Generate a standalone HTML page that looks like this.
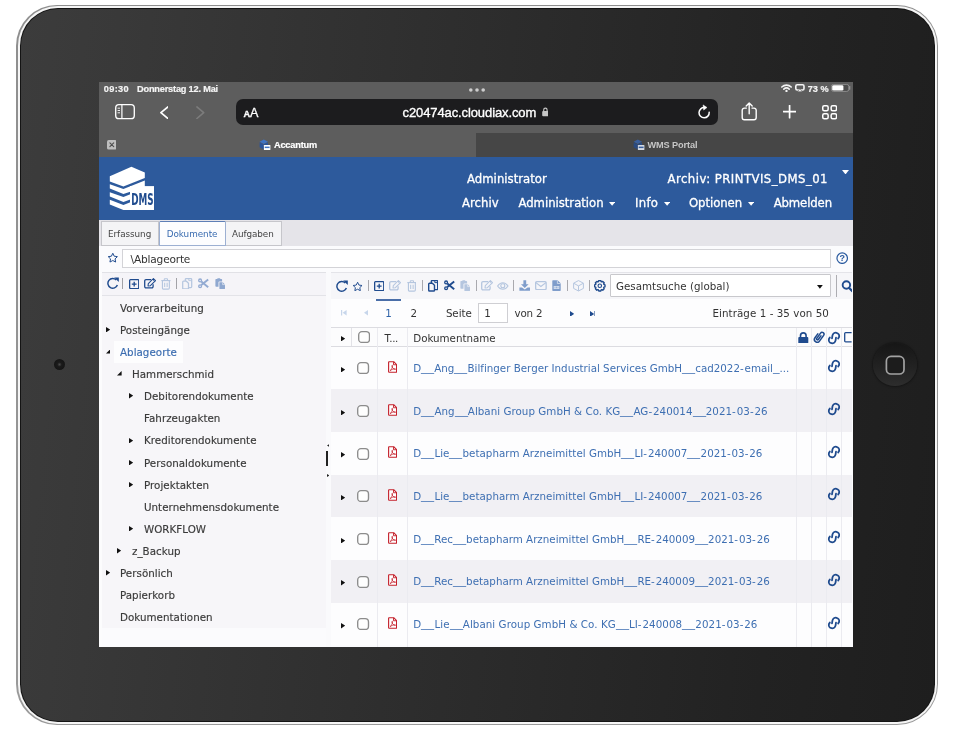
<!DOCTYPE html>
<html lang="de"><head><meta charset="utf-8"><title>Accantum</title>
<style>
html,body{margin:0;padding:0}
body{width:958px;height:731px;position:relative;overflow:hidden;background:#fff}
.a{position:absolute;display:block}
.t{position:absolute;white-space:nowrap;display:block}
.t i{font-style:normal}
.t i.u{display:inline-block;transform:translateY(-0.7px) scaleX(1.272);transform-origin:0 50%}
.t i.u2{margin-right:2.8px}
.t i.u1{margin-right:1.4px}
.t i.h{letter-spacing:0.9px}
#device{left:16.3px;top:5px;width:921.4px;height:720.1px;border-radius:41px;background:linear-gradient(180deg,#8e8e8e,#9a9a9a)}
#rim2{left:17.6px;top:6.2px;width:919px;height:717.8px;border-radius:39.8px;background:#f5f5f5}
#rim3{left:19.7px;top:8.1px;width:915.2px;height:714.2px;border-radius:37.8px;background:#141414}
#bezel{left:20.6px;top:9.1px;width:913.4px;height:712.4px;border-radius:36.9px;
 background:linear-gradient(96deg,#3c3c3c 0%,#393939 10%,#2c2c2c 50%,#222 82%,#1e1e1e 100%)}
#screen{will-change:transform;left:0;top:0;width:958px;height:731px;clip-path:inset(82px 105px 84px 99px);background:#fbfbfd}
</style></head>
<body>
<div id="device" class="a"></div><div id="rim2" class="a"></div><div id="rim3" class="a"></div><div id="bezel" class="a"></div>
<div class="a" style="left:53.60px;top:358.60px;width:11.40px;height:11.40px;border-radius:50%;background:radial-gradient(circle at 50% 50%,#4a4a4a 0,#1b1b1b 28%,#151515 70%,#262626 100%)"></div>
<div class="a" style="left:873.00px;top:342.60px;width:43.60px;height:43.60px;border-radius:50%;background:linear-gradient(180deg,#161616 0%,#222 55%,#2d2d2d 100%);box-shadow:0 0 2px 1px rgba(0,0,0,.35)"></div>
<svg class="a" style="left:884.60px;top:354.60px;width:20.40px;height:20.40px" viewBox="0 0 20.4 20.4" ><rect x="1.4" y="1.4" width="17.6" height="17.6" rx="4.6" fill="#1c1c1c" stroke="#a3a3a3" stroke-width="1.7"/></svg>
<div id="screen" class="a">
<div class="a" style="left:99.00px;top:81.00px;width:755.00px;height:76.20px;background:#5d5d5d"></div>
<div class="a" style="left:476.00px;top:132.60px;width:378.00px;height:24.60px;background:#464646"></div>
<div class="a" style="left:235.60px;top:99.00px;width:482.00px;height:25.60px;background:#1c1c1e;border-radius:7px"></div>
<svg class="a" style="left:468.60px;top:88.00px;width:16.00px;height:4.00px" viewBox="0 0 16 4" ><circle cx="1.8" cy="2" r="1.8" fill="#cdcdcd"/><circle cx="8" cy="2" r="1.8" fill="#cdcdcd"/><circle cx="14.2" cy="2" r="1.8" fill="#cdcdcd"/></svg>
<svg class="a" style="left:114.60px;top:104.40px;width:20.00px;height:15.40px" viewBox="0 0 20 15.4" ><rect x="0.7" y="0.7" width="18.6" height="14" rx="3.2" fill="none" stroke="#fff" stroke-width="1.35"/><path d="M6.9 0.7V14.7" stroke="#fff" stroke-width="1.2"/><path d="M2.6 4.2H5M2.6 6.5H5M2.6 8.8H5" stroke="#fff" stroke-width="0.9"/></svg>
<svg class="a" style="left:159.60px;top:105.60px;width:8.80px;height:13.40px" viewBox="0 0 8.8 13.4" ><path d="M7.9 0.9L0.9 6.7L7.9 12.5" fill="none" stroke="#fff" stroke-width="1.7" stroke-linecap="round" stroke-linejoin="round"/></svg>
<svg class="a" style="left:196.20px;top:105.60px;width:8.60px;height:13.40px" viewBox="0 0 8.6 13.4" ><path d="M0.9 0.9L7.7 6.7L0.9 12.5" fill="none" stroke="#7c7c7c" stroke-width="1.6" stroke-linecap="round" stroke-linejoin="round"/></svg>
<svg class="a" style="left:541.70px;top:107.40px;width:6.80px;height:9.40px" viewBox="0 0 6.8 9.4" ><rect x="0.2" y="3.9" width="6.4" height="5.3" rx="1" fill="#c6c6c6"/><path d="M1.7 4.3V2.9a1.7 1.7 0 0 1 3.4 0V4.3" fill="none" stroke="#c6c6c6" stroke-width="1.15"/></svg>
<svg class="a" style="left:696.20px;top:104.40px;width:16.00px;height:16.00px" viewBox="0 0 16 16" ><path d="M13.2 8.3A5.1 5.1 0 1 1 8.6 3.62" fill="none" stroke="#fff" stroke-width="1.5" stroke-linecap="round"/><path d="M7.1 0.9L11 3.5L7.7 6.1Z" fill="#fff" stroke="#fff" stroke-width="0.5" stroke-linejoin="round"/></svg>
<svg class="a" style="left:741.30px;top:102.20px;width:16.40px;height:19.00px" viewBox="0 0 16.4 19" ><path d="M5.4 6.1H3.4A2.2 2.2 0 0 0 1.2 8.3V15.6A2.2 2.2 0 0 0 3.4 17.8H13A2.2 2.2 0 0 0 15.2 15.6V8.3A2.2 2.2 0 0 0 13 6.1H11" fill="none" stroke="#fff" stroke-width="1.4" stroke-linecap="round"/><path d="M8.2 11.8V1.2M5.2 3.9L8.2 0.9L11.2 3.9" fill="none" stroke="#fff" stroke-width="1.4" stroke-linecap="round" stroke-linejoin="round"/></svg>
<svg class="a" style="left:783.10px;top:105.40px;width:13.20px;height:13.20px" viewBox="0 0 13.2 13.2" ><path d="M6.6 0.5V12.7M0.5 6.6H12.7" stroke="#fff" stroke-width="1.7" stroke-linecap="round"/></svg>
<svg class="a" style="left:822.20px;top:105.00px;width:15.30px;height:14.50px" viewBox="0 0 15.3 14.5" ><rect x="0.75" y="0.75" width="5.4" height="5.0" rx="1.5" fill="none" stroke="#fff" stroke-width="1.5"/><rect x="9.15" y="0.75" width="5.4" height="5.0" rx="1.5" fill="none" stroke="#fff" stroke-width="1.5"/><rect x="0.75" y="8.75" width="5.4" height="5.0" rx="1.5" fill="none" stroke="#fff" stroke-width="1.5"/><rect x="9.15" y="8.75" width="5.4" height="5.0" rx="1.5" fill="none" stroke="#fff" stroke-width="1.5"/></svg>
<svg class="a" style="left:781.00px;top:84.00px;width:11.00px;height:8.20px" viewBox="0 0 11 8.2" ><path d="M0.8 3A6.9 6.9 0 0 1 10.2 3" fill="none" stroke="#f4f4f4" stroke-width="1.6" stroke-linecap="round"/><path d="M2.8 5.1A4 4 0 0 1 8.2 5.1" fill="none" stroke="#f4f4f4" stroke-width="1.6" stroke-linecap="round"/><circle cx="5.5" cy="7" r="1.15" fill="#f4f4f4"/></svg>
<svg class="a" style="left:794.80px;top:84.30px;width:9.80px;height:8.00px" viewBox="0 0 9.8 8" ><rect x="0.8" y="0.8" width="8.2" height="5.2" rx="1.4" fill="none" stroke="#f4f4f4" stroke-width="1.6"/><path d="M2.5 7.7L4.9 4.7L7.3 7.7Z" fill="#f4f4f4" stroke="#5d5d5d" stroke-width="0.6"/></svg>
<svg class="a" style="left:830.80px;top:84.30px;width:20.00px;height:7.80px" viewBox="0 0 20 7.8" ><rect x="0.4" y="0.4" width="17.4" height="7" rx="2.1" fill="#4c4c4c" stroke="#9c9c9c" stroke-width="0.8"/><rect x="1.2" y="1.2" width="11.2" height="5.4" rx="1.4" fill="#fff"/><path d="M18.7 2.6V5.2" stroke="#9c9c9c" stroke-width="1.1" stroke-linecap="round"/></svg>
<svg class="a" style="left:106.50px;top:140.40px;width:9.60px;height:9.60px" viewBox="0 0 9.6 9.6" ><rect width="9.6" height="9.6" rx="1.7" fill="#bfbfbf"/><path d="M2.9 2.9L6.7 6.7M6.7 2.9L2.9 6.7" stroke="#505050" stroke-width="1.15" stroke-linecap="round"/></svg>
<svg class="a" style="left:259.00px;top:139.00px;width:11.60px;height:11.60px" viewBox="0 0 11.6 11.6" ><path d="M0.6 2.8L4.8 0.6L9 2.8L4.8 5Z" fill="#3f73c4"/><path d="M0.6 3.3L4.8 5.5V10.4L0.6 8.2Z" fill="#2b549b"/><path d="M5 5.5L9 3.3V6H5Z" fill="#2b549b"/><rect x="4.9" y="6.1" width="6.5" height="4.9" rx="0.5" fill="#fff"/><rect x="5.7" y="7.6" width="4.9" height="1.5" fill="#3f73c4"/></svg>
<svg class="a" style="left:633.00px;top:139.00px;width:11.60px;height:11.60px" viewBox="0 0 11.6 11.6" ><path d="M0.6 2.8L4.8 0.6L9 2.8L4.8 5Z" fill="#3a5f9c"/><path d="M0.6 3.3L4.8 5.5V10.4L0.6 8.2Z" fill="#2a4a80"/><path d="M5 5.5L9 3.3V6H5Z" fill="#2a4a80"/><rect x="4.9" y="6.1" width="6.5" height="4.9" rx="0.5" fill="#d4dae4"/><rect x="5.7" y="7.6" width="4.9" height="1.5" fill="#3a5f9c"/></svg>
<div class="a" style="left:99.00px;top:157.00px;width:755.00px;height:62.60px;background:#2d5a9c"></div>
<svg class="a" style="left:109.00px;top:166.00px;width:46.00px;height:45.40px" viewBox="0 0 46 45.4" ><path d="M0.8 10.2L22.4 0.8L35.8 6.4V12.1L14.4 20.5L0.8 15.4Z" fill="#fff"/><path d="M0.8 18.2L14.4 22.9L35.8 14.6V21H22V25.4L14.4 28.1L0.8 22.4Z" fill="#fff"/><path d="M0.8 26.2L14.4 30.9L22 28V33.2L14.4 36.1L0.8 30.4Z" fill="#fff"/><path d="M0.8 33.7L14.4 38.9L22 36V44H14.4L0.8 38.4Z" fill="#fff"/><rect x="21" y="20.1" width="24" height="23.9" fill="#fff"/><text x="22.2" y="39.2" font-family="DejaVu Sans, Verdana, sans-serif" font-weight="bold" font-size="15.5" fill="#1f4b8e" textLength="22.4" lengthAdjust="spacingAndGlyphs">DMS</text></svg>
<svg class="a" style="left:609.30px;top:201.90px;width:6.20px;height:3.80px" viewBox="0 0 6.2 3.8" ><path d="M0 0H6.2L3.1 3.8Z" fill="#fff"/></svg>
<svg class="a" style="left:663.90px;top:201.90px;width:6.20px;height:3.80px" viewBox="0 0 6.2 3.8" ><path d="M0 0H6.2L3.1 3.8Z" fill="#fff"/></svg>
<svg class="a" style="left:747.90px;top:201.90px;width:6.20px;height:3.80px" viewBox="0 0 6.2 3.8" ><path d="M0 0H6.2L3.1 3.8Z" fill="#fff"/></svg>
<svg class="a" style="left:841.50px;top:169.50px;width:7.00px;height:4.40px" viewBox="0 0 7 4.4" ><path d="M0 0H7L3.5 4.4Z" fill="#fff"/></svg>
<div class="a" style="left:99.00px;top:219.60px;width:755.00px;height:26.40px;background:#e5e4e9"></div>
<div class="a" style="left:99.00px;top:245.50px;width:755.00px;height:1.00px;background:#c2c2c6"></div>
<div class="a" style="left:101.40px;top:221.00px;width:58.00px;height:24.90px;background:#f4f4f6;border:1px solid #c6c6cb;box-sizing:border-box"></div>
<div class="a" style="left:225.00px;top:221.00px;width:56.80px;height:24.90px;background:#f4f4f6;border:1px solid #c6c6cb;box-sizing:border-box"></div>
<div class="a" style="left:159.00px;top:220.80px;width:66.60px;height:25.40px;background:#fdfdfe;border:1px solid #9db0d2;border-top:1.4px solid #5f7fb6;box-sizing:border-box;border-radius:1.5px 1.5px 0 0"></div>
<div class="a" style="left:99.00px;top:246.20px;width:755.00px;height:25.80px;background:#fbfbfd"></div>
<svg class="a" style="left:106.80px;top:252.40px;width:11.60px;height:11.14px" viewBox="0 0 24 23" ><path d="M12 2.6L14.9 8.7L21.5 9.6L16.7 14.2L17.9 20.8L12 17.6L6.1 20.8L7.3 14.2L2.5 9.6L9.1 8.7Z" fill="none" stroke="#1f4b8e" stroke-width="2.05" stroke-linejoin="round"/></svg>
<div class="a" style="left:122.40px;top:249.40px;width:708.40px;height:19.00px;background:#fff;border:1px solid #d3d3d7;box-sizing:border-box"></div>
<svg class="a" style="left:835.80px;top:251.80px;width:12.40px;height:12.40px" viewBox="0 0 12.4 12.4" ><circle cx="6.2" cy="6.2" r="5.25" fill="none" stroke="#2a5a9f" stroke-width="1.2"/><text x="6.2" y="9.4" text-anchor="middle" font-family="Liberation Sans, Arial, sans-serif" font-weight="bold" font-size="9" fill="#2a5a9f">?</text></svg>
<div class="a" style="left:99.00px;top:272.00px;width:3.40px;height:375.00px;background:#fcfcfd"></div>
<div class="a" style="left:102.40px;top:272.40px;width:223.20px;height:355.20px;background:#f5f4f8"></div>
<div class="a" style="left:102.40px;top:271.90px;width:223.20px;height:1.00px;background:#e1e1e6"></div>
<div class="a" style="left:102.40px;top:294.70px;width:223.20px;height:1.00px;background:#e3e3e8"></div>
<div class="a" style="left:102.40px;top:295.60px;width:223.20px;height:332.00px;background:#f7f6f9"></div>
<svg class="a" style="left:106.50px;top:277.30px;width:12.00px;height:12.00px" viewBox="0 0 12 12" ><path d="M9.3 3.0A4.85 4.85 0 1 0 10.35 7.9" fill="none" stroke="#1f4b8e" stroke-width="1.45"/><path d="M7.2 0.4H11.8V5Z" fill="#1f4b8e"/></svg>
<div class="a" style="left:122.40px;top:278.00px;width:1.00px;height:11.20px;background:#a2a2a7"></div>
<svg class="a" style="left:128.60px;top:278.60px;width:10.40px;height:10.20px" viewBox="0 0 10.4 10.2" ><rect x="0.65" y="0.65" width="9.1" height="8.9" rx="0.8" fill="none" stroke="#1f4b8e" stroke-width="1.3"/><path d="M5.2 2.7V7.5M2.8 5.1H7.6" stroke="#1f4b8e" stroke-width="1.3"/></svg>
<svg class="a" style="left:144.00px;top:278.20px;width:12.00px;height:10.60px" viewBox="0 0 12 10.6" ><path d="M7.2 1.7H2A1.3 1.3 0 0 0 0.7 3V8.6A1.3 1.3 0 0 0 2 9.9H7.8A1.3 1.3 0 0 0 9.1 8.6V6.3" fill="none" stroke="#1f4b8e" stroke-width="1.3"/><path d="M4.3 5.6L9.4 0.5L11.5 2.6L6.4 7.7L4 8Z" fill="none" stroke="#1f4b8e" stroke-width="1.05" stroke-linejoin="round"/><path d="M8.6 1.3L10.7 3.4" stroke="#1f4b8e" stroke-width="0.9"/></svg>
<svg class="a" style="left:161.30px;top:277.70px;width:9.80px;height:11.90px" viewBox="0 0 9.6 11.4" ><path d="M0.3 2.4H9.3" stroke="#b5c6df" stroke-width="1.1"/><path d="M3.2 2.2V1.2A0.6 0.6 0 0 1 3.8 0.6H5.8A0.6 0.6 0 0 1 6.4 1.2V2.2" fill="none" stroke="#b5c6df" stroke-width="1"/><path d="M1.4 2.6V9.6A1.2 1.2 0 0 0 2.6 10.8H7A1.2 1.2 0 0 0 8.2 9.6V2.6" fill="none" stroke="#b5c6df" stroke-width="1.1"/><path d="M3.6 4.6V8.8M6 4.6V8.8" stroke="#b5c6df" stroke-width="1"/></svg>
<div class="a" style="left:176.40px;top:278.00px;width:1.00px;height:11.20px;background:#a2a2a7"></div>
<svg class="a" style="left:182.20px;top:277.80px;width:10.40px;height:11.60px" viewBox="0 0 10.4 11.6" ><path d="M3.3 3.1V1.4A0.8 0.8 0 0 1 4.1 0.6H8.9A0.8 0.8 0 0 1 9.7 1.4V8.8A0.8 0.8 0 0 1 8.9 9.6H6.6" fill="none" stroke="#b5c6df" stroke-width="1.25"/><path d="M0.7 4A0.8 0.8 0 0 1 1.5 3.2H4.4L6.5 5.2V10.2A0.8 0.8 0 0 1 5.7 11H1.5A0.8 0.8 0 0 1 0.7 10.2Z" fill="none" stroke="#b5c6df" stroke-width="1.25" stroke-linejoin="round"/><path d="M6.8 0.8V2.6H9.5" fill="none" stroke="#b5c6df" stroke-width="0.88"/></svg>
<svg class="a" style="left:198.20px;top:278.20px;width:10.60px;height:10.60px" viewBox="0 0 10.6 10.6" ><circle cx="2.1" cy="2.4" r="1.4" fill="none" stroke="#93abd2" stroke-width="1.3"/><circle cx="2.1" cy="8.2" r="1.4" fill="none" stroke="#93abd2" stroke-width="1.3"/><path d="M3.3 3.5L10.2 9.2M3.3 7.1L10.2 1.4" stroke="#93abd2" stroke-width="1.9"/></svg>
<svg class="a" style="left:214.80px;top:277.80px;width:10.40px;height:11.40px" viewBox="0 0 10.4 11.4" ><path d="M0.4 1.6A0.7 0.7 0 0 1 1.1 0.9H2.4V0.3H5.2V0.9H6.4A0.7 0.7 0 0 1 7.1 1.6V3.4H4.4A0.9 0.9 0 0 0 3.5 4.3V8.8H1.1A0.7 0.7 0 0 1 0.4 8.1Z" fill="#8fa8d0"/><path d="M4.4 4.3H7.8L10 6.4V10.4A0.6 0.6 0 0 1 9.4 11H5A0.6 0.6 0 0 1 4.4 10.4Z" fill="#8fa8d0"/><path d="M7.6 4.4V6.6H9.9" fill="none" stroke="#f6f6f9" stroke-width="0.6"/></svg>
<svg class="a" style="left:105.90px;top:326.84px;width:4.20px;height:5.40px" viewBox="0 0 4.2 5.4" ><path d="M0 0L4.2 2.7L0 5.4Z" fill="#111"/></svg>
<div class="a" style="left:113.80px;top:341.20px;width:68.80px;height:21.40px;background:#fdfdfe"></div>
<svg class="a" style="left:105.70px;top:349.18px;width:4.60px;height:4.60px" viewBox="0 0 4.6 4.6" ><path d="M4.6 0V4.6H0Z" fill="#111"/></svg>
<svg class="a" style="left:117.10px;top:371.32px;width:4.60px;height:4.60px" viewBox="0 0 4.6 4.6" ><path d="M4.6 0V4.6H0Z" fill="#111"/></svg>
<svg class="a" style="left:129.30px;top:393.26px;width:4.20px;height:5.40px" viewBox="0 0 4.2 5.4" ><path d="M0 0L4.2 2.7L0 5.4Z" fill="#111"/></svg>
<svg class="a" style="left:129.30px;top:437.54px;width:4.20px;height:5.40px" viewBox="0 0 4.2 5.4" ><path d="M0 0L4.2 2.7L0 5.4Z" fill="#111"/></svg>
<svg class="a" style="left:129.30px;top:459.68px;width:4.20px;height:5.40px" viewBox="0 0 4.2 5.4" ><path d="M0 0L4.2 2.7L0 5.4Z" fill="#111"/></svg>
<svg class="a" style="left:129.30px;top:481.82px;width:4.20px;height:5.40px" viewBox="0 0 4.2 5.4" ><path d="M0 0L4.2 2.7L0 5.4Z" fill="#111"/></svg>
<svg class="a" style="left:129.30px;top:526.10px;width:4.20px;height:5.40px" viewBox="0 0 4.2 5.4" ><path d="M0 0L4.2 2.7L0 5.4Z" fill="#111"/></svg>
<svg class="a" style="left:117.30px;top:548.24px;width:4.20px;height:5.40px" viewBox="0 0 4.2 5.4" ><path d="M0 0L4.2 2.7L0 5.4Z" fill="#111"/></svg>
<svg class="a" style="left:105.90px;top:570.38px;width:4.20px;height:5.40px" viewBox="0 0 4.2 5.4" ><path d="M0 0L4.2 2.7L0 5.4Z" fill="#111"/></svg>
<div class="a" style="left:325.60px;top:272.00px;width:5.40px;height:375.00px;background:#fafafc"></div>
<div class="a" style="left:326.45px;top:451.20px;width:1.70px;height:14.40px;background:#222"></div>
<svg class="a" style="left:326.80px;top:443.80px;width:2.60px;height:3.00px" viewBox="0 0 2.6 3" ><path d="M2.6 0V3L0 1.5Z" fill="#222"/></svg>
<svg class="a" style="left:326.90px;top:474.00px;width:2.60px;height:3.00px" viewBox="0 0 2.6 3" ><path d="M0 0V3L2.6 1.5Z" fill="#222"/></svg>
<div class="a" style="left:331.20px;top:272.00px;width:522.80px;height:27.00px;background:#f6f6f9"></div>
<div class="a" style="left:331.20px;top:271.50px;width:522.80px;height:1.00px;background:#e4e4e9"></div>
<div class="a" style="left:331.20px;top:299.00px;width:520.40px;height:28.40px;background:#fdfdfe"></div>
<div class="a" style="left:851.60px;top:272.40px;width:2.40px;height:374.60px;background:#fbfbfd"></div>
<svg class="a" style="left:335.80px;top:279.80px;width:12.00px;height:12.00px" viewBox="0 0 12 12" ><path d="M9.3 3.0A4.85 4.85 0 1 0 10.35 7.9" fill="none" stroke="#1f4b8e" stroke-width="1.45"/><path d="M7.2 0.4H11.8V5Z" fill="#1f4b8e"/></svg>
<svg class="a" style="left:352.40px;top:280.60px;width:11.20px;height:10.75px" viewBox="0 0 24 23" ><path d="M12 2.6L14.9 8.7L21.5 9.6L16.7 14.2L17.9 20.8L12 17.6L6.1 20.8L7.3 14.2L2.5 9.6L9.1 8.7Z" fill="none" stroke="#1f4b8e" stroke-width="2.05" stroke-linejoin="round"/></svg>
<div class="a" style="left:367.90px;top:279.80px;width:1.00px;height:11.20px;background:#a9a9ae"></div>
<svg class="a" style="left:373.90px;top:280.80px;width:10.40px;height:10.20px" viewBox="0 0 10.4 10.2" ><rect x="0.65" y="0.65" width="9.1" height="8.9" rx="0.8" fill="none" stroke="#1f4b8e" stroke-width="1.3"/><path d="M5.2 2.7V7.5M2.8 5.1H7.6" stroke="#1f4b8e" stroke-width="1.3"/></svg>
<svg class="a" style="left:389.40px;top:280.40px;width:12.00px;height:10.60px" viewBox="0 0 12 10.6" ><path d="M7.2 1.7H2A1.3 1.3 0 0 0 0.7 3V8.6A1.3 1.3 0 0 0 2 9.9H7.8A1.3 1.3 0 0 0 9.1 8.6V6.3" fill="none" stroke="#b5c6df" stroke-width="1.3"/><path d="M4.3 5.6L9.4 0.5L11.5 2.6L6.4 7.7L4 8Z" fill="none" stroke="#b5c6df" stroke-width="1.05" stroke-linejoin="round"/><path d="M8.6 1.3L10.7 3.4" stroke="#b5c6df" stroke-width="0.9"/></svg>
<svg class="a" style="left:406.60px;top:280.00px;width:9.80px;height:11.90px" viewBox="0 0 9.6 11.4" ><path d="M0.3 2.4H9.3" stroke="#b5c6df" stroke-width="1.1"/><path d="M3.2 2.2V1.2A0.6 0.6 0 0 1 3.8 0.6H5.8A0.6 0.6 0 0 1 6.4 1.2V2.2" fill="none" stroke="#b5c6df" stroke-width="1"/><path d="M1.4 2.6V9.6A1.2 1.2 0 0 0 2.6 10.8H7A1.2 1.2 0 0 0 8.2 9.6V2.6" fill="none" stroke="#b5c6df" stroke-width="1.1"/><path d="M3.6 4.6V8.8M6 4.6V8.8" stroke="#b5c6df" stroke-width="1"/></svg>
<div class="a" style="left:421.90px;top:279.80px;width:1.00px;height:11.20px;background:#a9a9ae"></div>
<svg class="a" style="left:427.80px;top:280.20px;width:10.40px;height:11.60px" viewBox="0 0 10.4 11.6" ><path d="M3.3 3.1V1.4A0.8 0.8 0 0 1 4.1 0.6H8.9A0.8 0.8 0 0 1 9.7 1.4V8.8A0.8 0.8 0 0 1 8.9 9.6H6.6" fill="none" stroke="#1f4b8e" stroke-width="1.4"/><path d="M0.7 4A0.8 0.8 0 0 1 1.5 3.2H4.4L6.5 5.2V10.2A0.8 0.8 0 0 1 5.7 11H1.5A0.8 0.8 0 0 1 0.7 10.2Z" fill="none" stroke="#1f4b8e" stroke-width="1.4" stroke-linejoin="round"/><path d="M6.8 0.8V2.6H9.5" fill="none" stroke="#1f4b8e" stroke-width="0.98"/></svg>
<svg class="a" style="left:444.00px;top:280.40px;width:10.60px;height:10.60px" viewBox="0 0 10.6 10.6" ><circle cx="2.1" cy="2.4" r="1.4" fill="none" stroke="#1f4b8e" stroke-width="1.3"/><circle cx="2.1" cy="8.2" r="1.4" fill="none" stroke="#1f4b8e" stroke-width="1.3"/><path d="M3.3 3.5L10.2 9.2M3.3 7.1L10.2 1.4" stroke="#1f4b8e" stroke-width="1.9"/></svg>
<svg class="a" style="left:460.30px;top:280.00px;width:10.40px;height:11.40px" viewBox="0 0 10.4 11.4" ><path d="M0.4 1.6A0.7 0.7 0 0 1 1.1 0.9H2.4V0.3H5.2V0.9H6.4A0.7 0.7 0 0 1 7.1 1.6V3.4H4.4A0.9 0.9 0 0 0 3.5 4.3V8.8H1.1A0.7 0.7 0 0 1 0.4 8.1Z" fill="#b5c6df"/><path d="M4.4 4.3H7.8L10 6.4V10.4A0.6 0.6 0 0 1 9.4 11H5A0.6 0.6 0 0 1 4.4 10.4Z" fill="#b5c6df"/><path d="M7.6 4.4V6.6H9.9" fill="none" stroke="#f6f6f9" stroke-width="0.6"/></svg>
<div class="a" style="left:475.90px;top:279.80px;width:1.00px;height:11.20px;background:#a9a9ae"></div>
<svg class="a" style="left:480.60px;top:280.40px;width:12.00px;height:10.60px" viewBox="0 0 12 10.6" ><path d="M7.2 1.7H2A1.3 1.3 0 0 0 0.7 3V8.6A1.3 1.3 0 0 0 2 9.9H7.8A1.3 1.3 0 0 0 9.1 8.6V6.3" fill="none" stroke="#b5c6df" stroke-width="1.3"/><path d="M4.3 5.6L9.4 0.5L11.5 2.6L6.4 7.7L4 8Z" fill="none" stroke="#b5c6df" stroke-width="1.05" stroke-linejoin="round"/><path d="M8.6 1.3L10.7 3.4" stroke="#b5c6df" stroke-width="0.9"/></svg>
<svg class="a" style="left:497.40px;top:282.00px;width:11.60px;height:8.00px" viewBox="0 0 11.6 8" ><path d="M0.6 4C2.2 1.5 4 0.7 5.8 0.7S9.4 1.5 11 4C9.4 6.5 7.6 7.3 5.8 7.3S2.2 6.5 0.6 4Z" fill="none" stroke="#b5c6df" stroke-width="1.1"/><circle cx="5.8" cy="3.8" r="2" fill="none" stroke="#b5c6df" stroke-width="1.1"/></svg>
<div class="a" style="left:513.00px;top:279.80px;width:1.00px;height:11.20px;background:#a9a9ae"></div>
<svg class="a" style="left:518.80px;top:280.00px;width:11.60px;height:11.00px" viewBox="0 0 11.6 11" ><path d="M4.4 0.3H7.2V4.2H9.6L5.8 8L2 4.2H4.4Z" fill="#7f9dcb"/><path d="M0.4 7.6H3L5.8 9.6L8.6 7.6H11.2V10.7H0.4Z" fill="#7f9dcb"/></svg>
<svg class="a" style="left:535.00px;top:281.20px;width:11.80px;height:9.20px" viewBox="0 0 11.8 9.2" ><rect x="0.65" y="0.65" width="10.5" height="7.9" rx="1.1" fill="none" stroke="#b5c6df" stroke-width="1.3"/><path d="M0.9 1.6L5.9 5.6L10.9 1.6" fill="none" stroke="#b5c6df" stroke-width="1.2"/></svg>
<svg class="a" style="left:552.40px;top:280.00px;width:9.00px;height:11.20px" viewBox="0 0 9 11.2" ><path d="M0.3 0.9A0.6 0.6 0 0 1 0.9 0.3H5.6L8.7 3.3V10.3A0.6 0.6 0 0 1 8.1 10.9H0.9A0.6 0.6 0 0 1 0.3 10.3Z" fill="#7f9dcb"/><path d="M5.4 0.5V3.5H8.5" fill="none" stroke="#f6f6f9" stroke-width="0.6"/><rect x="1.7" y="6" width="5.6" height="3" fill="#dfe7f3"/><path d="M3 6.6V8.4M4.5 6.6V8.4M6 6.6V8.4" stroke="#7f9dcb" stroke-width="0.7"/></svg>
<div class="a" style="left:566.90px;top:279.80px;width:1.00px;height:11.20px;background:#a9a9ae"></div>
<svg class="a" style="left:572.50px;top:280.00px;width:11.00px;height:11.60px" viewBox="0 0 11 11.6" ><path d="M5.5 0.6L10.4 3.2V8.4L5.5 11L0.6 8.4V3.2Z" fill="none" stroke="#b5c6df" stroke-width="1" stroke-linejoin="round"/><path d="M0.8 3.3L5.5 5.9L10.2 3.3M5.5 5.9V10.8" fill="none" stroke="#b5c6df" stroke-width="1"/></svg>
<div class="a" style="left:588.50px;top:279.80px;width:1.00px;height:11.20px;background:#a9a9ae"></div>
<svg class="a" style="left:594.00px;top:280.20px;width:11.60px;height:11.60px" viewBox="0 0 11.6 11.6" ><path d="M4.80 0.60L6.80 0.60L7.17 1.67L7.75 1.91L8.77 1.41L10.19 2.83L9.69 3.85L9.93 4.43L11.00 4.80L11.00 6.80L9.93 7.17L9.69 7.75L10.19 8.77L8.77 10.19L7.75 9.69L7.17 9.93L6.80 11.00L4.80 11.00L4.43 9.93L3.85 9.69L2.83 10.19L1.41 8.77L1.91 7.75L1.67 7.17L0.60 6.80L0.60 4.80L1.67 4.43L1.91 3.85L1.41 2.83L2.83 1.41L3.85 1.91L4.43 1.67Z" fill="none" stroke="#1f4b8e" stroke-width="1.4" stroke-linejoin="round"/><circle cx="5.8" cy="5.8" r="1.75" fill="none" stroke="#1f4b8e" stroke-width="1.1"/></svg>
<div class="a" style="left:610.00px;top:274.40px;width:220.80px;height:22.50px;background:#fff;border:1px solid #c8c8cc;box-sizing:border-box;border-radius:1px"></div>
<svg class="a" style="left:817.20px;top:285.20px;width:5.80px;height:3.80px" viewBox="0 0 5.8 3.8" ><path d="M0 0H5.8L2.9 3.8Z" fill="#111"/></svg>
<div class="a" style="left:835.70px;top:275.00px;width:1.00px;height:21.60px;background:#adadb2"></div>
<svg class="a" overflow="hidden" style="left:841.00px;top:279.60px;width:10.60px;height:13.00px" viewBox="0 0 10.6 13" ><circle cx="5.4" cy="5" r="3.75" fill="none" stroke="#1f4b8e" stroke-width="1.9"/><path d="M8.2 7.9L11.6 11.4" stroke="#1f4b8e" stroke-width="2.2" stroke-linecap="round"/></svg>
<div class="a" style="left:375.70px;top:298.95px;width:25.50px;height:1.70px;background:#4a6ea8"></div>
<svg class="a" style="left:341.20px;top:310.40px;width:5.60px;height:5.60px" viewBox="0 0 5.6 5.6" ><path d="M0.6 0V5.6" stroke="#c7d6eb" stroke-width="1.2"/><path d="M5.6 0L1.6 2.8L5.6 5.6Z" fill="#c7d6eb"/></svg>
<svg class="a" style="left:363.60px;top:310.40px;width:4.00px;height:5.60px" viewBox="0 0 4 5.6" ><path d="M4 0L0 2.8L4 5.6Z" fill="#c7d6eb"/></svg>
<div class="a" style="left:478.00px;top:302.60px;width:30.40px;height:20.80px;background:#fff;border:1px solid #cfcfd3;box-sizing:border-box"></div>
<svg class="a" style="left:569.90px;top:310.50px;width:4.20px;height:5.80px" viewBox="0 0 4.2 5.8" ><path d="M0 0L4.2 2.9L0 5.8Z" fill="#1f4b8e"/></svg>
<svg class="a" style="left:589.70px;top:310.50px;width:5.80px;height:5.80px" viewBox="0 0 5.8 5.8" ><path d="M0 0L4.2 2.9L0 5.8Z" fill="#1f4b8e"/><path d="M5.1 0V5.8" stroke="#1f4b8e" stroke-width="1.3"/></svg>
<div class="a" style="left:331.20px;top:326.90px;width:520.40px;height:1.00px;background:#dcdce1"></div>
<div class="a" style="left:331.20px;top:327.90px;width:520.40px;height:18.40px;background:#fcfcfd"></div>
<div class="a" style="left:331.20px;top:345.80px;width:520.40px;height:1.00px;background:#dcdce1"></div>
<div class="a" style="left:331.20px;top:346.80px;width:520.40px;height:42.40px;background:#fdfdfe"></div>
<div class="a" style="left:331.20px;top:389.20px;width:520.40px;height:42.70px;background:#f1f0f4"></div>
<div class="a" style="left:331.20px;top:431.90px;width:520.40px;height:42.70px;background:#fdfdfe"></div>
<div class="a" style="left:331.20px;top:474.60px;width:520.40px;height:42.70px;background:#f1f0f4"></div>
<div class="a" style="left:331.20px;top:517.30px;width:520.40px;height:42.70px;background:#fdfdfe"></div>
<div class="a" style="left:331.20px;top:560.00px;width:520.40px;height:42.70px;background:#f1f0f4"></div>
<div class="a" style="left:331.20px;top:602.70px;width:520.40px;height:42.70px;background:#fdfdfe"></div>
<div class="a" style="left:351.30px;top:328.00px;width:1.00px;height:18.00px;background:#e2e2e7"></div>
<div class="a" style="left:377.00px;top:328.00px;width:1.00px;height:319.00px;background:#ebebf0"></div>
<div class="a" style="left:406.50px;top:328.00px;width:1.00px;height:319.00px;background:#ebebf0"></div>
<div class="a" style="left:795.90px;top:328.00px;width:1.00px;height:319.00px;background:#ebebf0"></div>
<div class="a" style="left:811.20px;top:328.00px;width:1.00px;height:319.00px;background:#ebebf0"></div>
<div class="a" style="left:825.80px;top:328.00px;width:1.00px;height:319.00px;background:#ebebf0"></div>
<div class="a" style="left:840.90px;top:328.00px;width:1.00px;height:319.00px;background:#ebebf0"></div>
<svg class="a" style="left:341.30px;top:335.50px;width:4.20px;height:5.40px" viewBox="0 0 4.2 5.4" ><path d="M0 0L4.2 2.7L0 5.4Z" fill="#111"/></svg>
<svg class="a" style="left:358.00px;top:330.80px;width:12.20px;height:12.20px" viewBox="0 0 12.2 12.2" ><rect x="0.7" y="0.7" width="10.8" height="10.8" rx="3.3" fill="#fefefe" stroke="#8c8c8c" stroke-width="1.35"/></svg>
<svg class="a" style="left:798.30px;top:331.60px;width:10.60px;height:11.60px" viewBox="0 0 10.6 11.6" ><rect x="0.3" y="5" width="10" height="6.4" rx="0.9" fill="#1f4b8e"/><path d="M2.5 5.4V3.7a2.8 2.8 0 0 1 5.6 0V5.4" fill="none" stroke="#1f4b8e" stroke-width="1.6"/></svg>
<svg class="a" style="left:813.40px;top:331.40px;width:12.00px;height:12.00px" viewBox="0 0 12 12" ><g transform="translate(6 6) rotate(36) scale(1.12)" fill="none" stroke="#1f4b8e" stroke-width="1.35" stroke-linecap="round"><path d="M-2.5 -1.6V2.7A2.5 2.5 0 0 0 2.5 2.7V-3.6A1.7 1.7 0 0 0 -0.9 -3.6V2.2A0.85 0.85 0 0 0 0.8 2.2V-1.8"/></g></svg>
<svg class="a" style="left:827.00px;top:330.50px;width:14.00px;height:14.00px" viewBox="0 0 14 14" ><g transform="translate(7 7)" fill="none" stroke="#1f4b8e" stroke-width="1.8" stroke-linecap="round"><path d="M-3.25 3.0L-3.4 0A3.4 3.4 0 0 1 3.4 0L2.8 1.9" transform="translate(1.8 -1.9) rotate(12)"/><path d="M-3.25 3.0L-3.4 0A3.4 3.4 0 0 1 3.4 0L2.8 1.9" transform="rotate(180) translate(1.8 -1.9) rotate(12)"/></g></svg>
<svg class="a" style="left:843.90px;top:332.40px;width:8.00px;height:10.60px" viewBox="0 0 8 10.6" ><path d="M7.6 0.7H1.6A0.9 0.9 0 0 0 0.7 1.6V9A0.9 0.9 0 0 0 1.6 9.9H7.6" fill="none" stroke="#1f4b8e" stroke-width="1.3"/></svg>
<svg class="a" style="left:341.30px;top:366.95px;width:4.20px;height:5.40px" viewBox="0 0 4.2 5.4" ><path d="M0 0L4.2 2.7L0 5.4Z" fill="#111"/></svg>
<svg class="a" style="left:357.35px;top:362.10px;width:12.20px;height:12.20px" viewBox="0 0 12.2 12.2" ><rect x="0.7" y="0.7" width="10.8" height="10.8" rx="3.3" fill="#fefefe" stroke="#8c8c8c" stroke-width="1.35"/></svg>
<svg class="a" style="left:387.70px;top:360.85px;width:9.20px;height:12.00px" viewBox="0 0 9 11.6" ><path d="M0.6 1.1A0.5 0.5 0 0 1 1.1 0.6H5.6L8.4 3.4V10.5A0.5 0.5 0 0 1 7.9 11H1.1A0.5 0.5 0 0 1 0.6 10.5Z" fill="#fff" stroke="#c4202b" stroke-width="1.1" stroke-linejoin="round"/><path d="M5.4 0.8V3.6H8.2" fill="none" stroke="#c4202b" stroke-width="0.9"/><path d="M2 9.3C3.2 8.6 4.3 6.6 4.4 4.6C4.4 3.9 3.8 3.9 3.8 4.6C3.9 6.3 5.4 8 7.1 8.2C7.7 8.2 7.6 7.6 7 7.6C5.4 7.6 3.2 8.3 2.2 9.4Z" fill="none" stroke="#c4202b" stroke-width="0.75" stroke-linejoin="round"/></svg>
<svg class="a" style="left:826.80px;top:359.35px;width:14.00px;height:14.00px" viewBox="0 0 14 14" ><g transform="translate(7 7)" fill="none" stroke="#1f4b8e" stroke-width="1.8" stroke-linecap="round"><path d="M-3.25 3.0L-3.4 0A3.4 3.4 0 0 1 3.4 0L2.8 1.9" transform="translate(1.8 -1.9) rotate(12)"/><path d="M-3.25 3.0L-3.4 0A3.4 3.4 0 0 1 3.4 0L2.8 1.9" transform="rotate(180) translate(1.8 -1.9) rotate(12)"/></g></svg>
<svg class="a" style="left:341.30px;top:409.65px;width:4.20px;height:5.40px" viewBox="0 0 4.2 5.4" ><path d="M0 0L4.2 2.7L0 5.4Z" fill="#111"/></svg>
<svg class="a" style="left:357.35px;top:404.80px;width:12.20px;height:12.20px" viewBox="0 0 12.2 12.2" ><rect x="0.7" y="0.7" width="10.8" height="10.8" rx="3.3" fill="#fefefe" stroke="#8c8c8c" stroke-width="1.35"/></svg>
<svg class="a" style="left:387.70px;top:403.55px;width:9.20px;height:12.00px" viewBox="0 0 9 11.6" ><path d="M0.6 1.1A0.5 0.5 0 0 1 1.1 0.6H5.6L8.4 3.4V10.5A0.5 0.5 0 0 1 7.9 11H1.1A0.5 0.5 0 0 1 0.6 10.5Z" fill="#fff" stroke="#c4202b" stroke-width="1.1" stroke-linejoin="round"/><path d="M5.4 0.8V3.6H8.2" fill="none" stroke="#c4202b" stroke-width="0.9"/><path d="M2 9.3C3.2 8.6 4.3 6.6 4.4 4.6C4.4 3.9 3.8 3.9 3.8 4.6C3.9 6.3 5.4 8 7.1 8.2C7.7 8.2 7.6 7.6 7 7.6C5.4 7.6 3.2 8.3 2.2 9.4Z" fill="none" stroke="#c4202b" stroke-width="0.75" stroke-linejoin="round"/></svg>
<svg class="a" style="left:826.80px;top:402.05px;width:14.00px;height:14.00px" viewBox="0 0 14 14" ><g transform="translate(7 7)" fill="none" stroke="#1f4b8e" stroke-width="1.8" stroke-linecap="round"><path d="M-3.25 3.0L-3.4 0A3.4 3.4 0 0 1 3.4 0L2.8 1.9" transform="translate(1.8 -1.9) rotate(12)"/><path d="M-3.25 3.0L-3.4 0A3.4 3.4 0 0 1 3.4 0L2.8 1.9" transform="rotate(180) translate(1.8 -1.9) rotate(12)"/></g></svg>
<svg class="a" style="left:341.30px;top:452.35px;width:4.20px;height:5.40px" viewBox="0 0 4.2 5.4" ><path d="M0 0L4.2 2.7L0 5.4Z" fill="#111"/></svg>
<svg class="a" style="left:357.35px;top:447.50px;width:12.20px;height:12.20px" viewBox="0 0 12.2 12.2" ><rect x="0.7" y="0.7" width="10.8" height="10.8" rx="3.3" fill="#fefefe" stroke="#8c8c8c" stroke-width="1.35"/></svg>
<svg class="a" style="left:387.70px;top:446.25px;width:9.20px;height:12.00px" viewBox="0 0 9 11.6" ><path d="M0.6 1.1A0.5 0.5 0 0 1 1.1 0.6H5.6L8.4 3.4V10.5A0.5 0.5 0 0 1 7.9 11H1.1A0.5 0.5 0 0 1 0.6 10.5Z" fill="#fff" stroke="#c4202b" stroke-width="1.1" stroke-linejoin="round"/><path d="M5.4 0.8V3.6H8.2" fill="none" stroke="#c4202b" stroke-width="0.9"/><path d="M2 9.3C3.2 8.6 4.3 6.6 4.4 4.6C4.4 3.9 3.8 3.9 3.8 4.6C3.9 6.3 5.4 8 7.1 8.2C7.7 8.2 7.6 7.6 7 7.6C5.4 7.6 3.2 8.3 2.2 9.4Z" fill="none" stroke="#c4202b" stroke-width="0.75" stroke-linejoin="round"/></svg>
<svg class="a" style="left:826.80px;top:444.75px;width:14.00px;height:14.00px" viewBox="0 0 14 14" ><g transform="translate(7 7)" fill="none" stroke="#1f4b8e" stroke-width="1.8" stroke-linecap="round"><path d="M-3.25 3.0L-3.4 0A3.4 3.4 0 0 1 3.4 0L2.8 1.9" transform="translate(1.8 -1.9) rotate(12)"/><path d="M-3.25 3.0L-3.4 0A3.4 3.4 0 0 1 3.4 0L2.8 1.9" transform="rotate(180) translate(1.8 -1.9) rotate(12)"/></g></svg>
<svg class="a" style="left:341.30px;top:495.05px;width:4.20px;height:5.40px" viewBox="0 0 4.2 5.4" ><path d="M0 0L4.2 2.7L0 5.4Z" fill="#111"/></svg>
<svg class="a" style="left:357.35px;top:490.20px;width:12.20px;height:12.20px" viewBox="0 0 12.2 12.2" ><rect x="0.7" y="0.7" width="10.8" height="10.8" rx="3.3" fill="#fefefe" stroke="#8c8c8c" stroke-width="1.35"/></svg>
<svg class="a" style="left:387.70px;top:488.95px;width:9.20px;height:12.00px" viewBox="0 0 9 11.6" ><path d="M0.6 1.1A0.5 0.5 0 0 1 1.1 0.6H5.6L8.4 3.4V10.5A0.5 0.5 0 0 1 7.9 11H1.1A0.5 0.5 0 0 1 0.6 10.5Z" fill="#fff" stroke="#c4202b" stroke-width="1.1" stroke-linejoin="round"/><path d="M5.4 0.8V3.6H8.2" fill="none" stroke="#c4202b" stroke-width="0.9"/><path d="M2 9.3C3.2 8.6 4.3 6.6 4.4 4.6C4.4 3.9 3.8 3.9 3.8 4.6C3.9 6.3 5.4 8 7.1 8.2C7.7 8.2 7.6 7.6 7 7.6C5.4 7.6 3.2 8.3 2.2 9.4Z" fill="none" stroke="#c4202b" stroke-width="0.75" stroke-linejoin="round"/></svg>
<svg class="a" style="left:826.80px;top:487.45px;width:14.00px;height:14.00px" viewBox="0 0 14 14" ><g transform="translate(7 7)" fill="none" stroke="#1f4b8e" stroke-width="1.8" stroke-linecap="round"><path d="M-3.25 3.0L-3.4 0A3.4 3.4 0 0 1 3.4 0L2.8 1.9" transform="translate(1.8 -1.9) rotate(12)"/><path d="M-3.25 3.0L-3.4 0A3.4 3.4 0 0 1 3.4 0L2.8 1.9" transform="rotate(180) translate(1.8 -1.9) rotate(12)"/></g></svg>
<svg class="a" style="left:341.30px;top:537.75px;width:4.20px;height:5.40px" viewBox="0 0 4.2 5.4" ><path d="M0 0L4.2 2.7L0 5.4Z" fill="#111"/></svg>
<svg class="a" style="left:357.35px;top:532.90px;width:12.20px;height:12.20px" viewBox="0 0 12.2 12.2" ><rect x="0.7" y="0.7" width="10.8" height="10.8" rx="3.3" fill="#fefefe" stroke="#8c8c8c" stroke-width="1.35"/></svg>
<svg class="a" style="left:387.70px;top:531.65px;width:9.20px;height:12.00px" viewBox="0 0 9 11.6" ><path d="M0.6 1.1A0.5 0.5 0 0 1 1.1 0.6H5.6L8.4 3.4V10.5A0.5 0.5 0 0 1 7.9 11H1.1A0.5 0.5 0 0 1 0.6 10.5Z" fill="#fff" stroke="#c4202b" stroke-width="1.1" stroke-linejoin="round"/><path d="M5.4 0.8V3.6H8.2" fill="none" stroke="#c4202b" stroke-width="0.9"/><path d="M2 9.3C3.2 8.6 4.3 6.6 4.4 4.6C4.4 3.9 3.8 3.9 3.8 4.6C3.9 6.3 5.4 8 7.1 8.2C7.7 8.2 7.6 7.6 7 7.6C5.4 7.6 3.2 8.3 2.2 9.4Z" fill="none" stroke="#c4202b" stroke-width="0.75" stroke-linejoin="round"/></svg>
<svg class="a" style="left:826.80px;top:530.15px;width:14.00px;height:14.00px" viewBox="0 0 14 14" ><g transform="translate(7 7)" fill="none" stroke="#1f4b8e" stroke-width="1.8" stroke-linecap="round"><path d="M-3.25 3.0L-3.4 0A3.4 3.4 0 0 1 3.4 0L2.8 1.9" transform="translate(1.8 -1.9) rotate(12)"/><path d="M-3.25 3.0L-3.4 0A3.4 3.4 0 0 1 3.4 0L2.8 1.9" transform="rotate(180) translate(1.8 -1.9) rotate(12)"/></g></svg>
<svg class="a" style="left:341.30px;top:580.45px;width:4.20px;height:5.40px" viewBox="0 0 4.2 5.4" ><path d="M0 0L4.2 2.7L0 5.4Z" fill="#111"/></svg>
<svg class="a" style="left:357.35px;top:575.60px;width:12.20px;height:12.20px" viewBox="0 0 12.2 12.2" ><rect x="0.7" y="0.7" width="10.8" height="10.8" rx="3.3" fill="#fefefe" stroke="#8c8c8c" stroke-width="1.35"/></svg>
<svg class="a" style="left:387.70px;top:574.35px;width:9.20px;height:12.00px" viewBox="0 0 9 11.6" ><path d="M0.6 1.1A0.5 0.5 0 0 1 1.1 0.6H5.6L8.4 3.4V10.5A0.5 0.5 0 0 1 7.9 11H1.1A0.5 0.5 0 0 1 0.6 10.5Z" fill="#fff" stroke="#c4202b" stroke-width="1.1" stroke-linejoin="round"/><path d="M5.4 0.8V3.6H8.2" fill="none" stroke="#c4202b" stroke-width="0.9"/><path d="M2 9.3C3.2 8.6 4.3 6.6 4.4 4.6C4.4 3.9 3.8 3.9 3.8 4.6C3.9 6.3 5.4 8 7.1 8.2C7.7 8.2 7.6 7.6 7 7.6C5.4 7.6 3.2 8.3 2.2 9.4Z" fill="none" stroke="#c4202b" stroke-width="0.75" stroke-linejoin="round"/></svg>
<svg class="a" style="left:826.80px;top:572.85px;width:14.00px;height:14.00px" viewBox="0 0 14 14" ><g transform="translate(7 7)" fill="none" stroke="#1f4b8e" stroke-width="1.8" stroke-linecap="round"><path d="M-3.25 3.0L-3.4 0A3.4 3.4 0 0 1 3.4 0L2.8 1.9" transform="translate(1.8 -1.9) rotate(12)"/><path d="M-3.25 3.0L-3.4 0A3.4 3.4 0 0 1 3.4 0L2.8 1.9" transform="rotate(180) translate(1.8 -1.9) rotate(12)"/></g></svg>
<svg class="a" style="left:341.30px;top:623.15px;width:4.20px;height:5.40px" viewBox="0 0 4.2 5.4" ><path d="M0 0L4.2 2.7L0 5.4Z" fill="#111"/></svg>
<svg class="a" style="left:357.35px;top:618.30px;width:12.20px;height:12.20px" viewBox="0 0 12.2 12.2" ><rect x="0.7" y="0.7" width="10.8" height="10.8" rx="3.3" fill="#fefefe" stroke="#8c8c8c" stroke-width="1.35"/></svg>
<svg class="a" style="left:387.70px;top:617.05px;width:9.20px;height:12.00px" viewBox="0 0 9 11.6" ><path d="M0.6 1.1A0.5 0.5 0 0 1 1.1 0.6H5.6L8.4 3.4V10.5A0.5 0.5 0 0 1 7.9 11H1.1A0.5 0.5 0 0 1 0.6 10.5Z" fill="#fff" stroke="#c4202b" stroke-width="1.1" stroke-linejoin="round"/><path d="M5.4 0.8V3.6H8.2" fill="none" stroke="#c4202b" stroke-width="0.9"/><path d="M2 9.3C3.2 8.6 4.3 6.6 4.4 4.6C4.4 3.9 3.8 3.9 3.8 4.6C3.9 6.3 5.4 8 7.1 8.2C7.7 8.2 7.6 7.6 7 7.6C5.4 7.6 3.2 8.3 2.2 9.4Z" fill="none" stroke="#c4202b" stroke-width="0.75" stroke-linejoin="round"/></svg>
<svg class="a" style="left:826.80px;top:615.55px;width:14.00px;height:14.00px" viewBox="0 0 14 14" ><g transform="translate(7 7)" fill="none" stroke="#1f4b8e" stroke-width="1.8" stroke-linecap="round"><path d="M-3.25 3.0L-3.4 0A3.4 3.4 0 0 1 3.4 0L2.8 1.9" transform="translate(1.8 -1.9) rotate(12)"/><path d="M-3.25 3.0L-3.4 0A3.4 3.4 0 0 1 3.4 0L2.8 1.9" transform="rotate(180) translate(1.8 -1.9) rotate(12)"/></g></svg>
<span class="t" style='left:103.70px;top:82px;font:bold 9.2px/14px "Liberation Sans", Arial, sans-serif;color:#f4f4f4;letter-spacing:0.360px;-webkit-text-stroke:0.2px #f4f4f4;'>09:30</span>
<span class="t" style='left:137.00px;top:82px;font:bold 9.2px/14px "Liberation Sans", Arial, sans-serif;color:#f4f4f4;letter-spacing:-0.181px;-webkit-text-stroke:0.2px #f4f4f4;'>Donnerstag 12. Mai</span>
<span class="t" style='left:807.70px;top:82px;font:bold 9.2px/14px "Liberation Sans", Arial, sans-serif;color:#f4f4f4;letter-spacing:0.037px;-webkit-text-stroke:0.2px #f4f4f4;'>73 %</span>
<span class="t" style='left:243.60px;top:106px;font:normal 12.6px/14px "Liberation Sans", Arial, sans-serif;color:#fff;letter-spacing:-0.123px;-webkit-text-stroke:0.3px #fff;'><span style="font-size:9.2px;font-weight:bold">A</span>A</span>
<span class="t" style='left:402.50px;top:106px;font:normal 13px/14px "Liberation Sans", Arial, sans-serif;color:#fff;letter-spacing:-0.103px;-webkit-text-stroke:0.35px #fff;'>c20474ac.cloudiax.com</span>
<span class="t" style='left:274.00px;top:138px;font:bold 9.2px/14px "Liberation Sans", Arial, sans-serif;color:#fff;letter-spacing:-0.190px;-webkit-text-stroke:0.2px #fff;'>Accantum</span>
<span class="t" style='left:647.50px;top:138px;font:bold 9.2px/14px "Liberation Sans", Arial, sans-serif;color:#c6c6c6;letter-spacing:-0.105px;'>WMS Portal</span>
<span class="t" style='left:467.00px;top:172px;font:normal 11.7px/14px "DejaVu Sans", Verdana, sans-serif;color:#fff;letter-spacing:0.009px;-webkit-text-stroke:0.3px #fff;'>Administrator</span>
<span class="t" style='left:667.50px;top:172px;font:normal 11.7px/14px "DejaVu Sans", Verdana, sans-serif;color:#fff;letter-spacing:0.457px;-webkit-text-stroke:0.3px #fff;'>Archiv: PRINTVIS_DMS_01</span>
<span class="t" style='left:462.00px;top:196px;font:normal 11.7px/14px "DejaVu Sans", Verdana, sans-serif;color:#fff;letter-spacing:0.026px;-webkit-text-stroke:0.3px #fff;'>Archiv</span>
<span class="t" style='left:518.40px;top:196px;font:normal 11.7px/14px "DejaVu Sans", Verdana, sans-serif;color:#fff;letter-spacing:-0.024px;-webkit-text-stroke:0.3px #fff;'>Administration</span>
<span class="t" style='left:635.00px;top:196px;font:normal 11.7px/14px "DejaVu Sans", Verdana, sans-serif;color:#fff;letter-spacing:0.269px;-webkit-text-stroke:0.3px #fff;'>Info</span>
<span class="t" style='left:689.00px;top:196px;font:normal 11.7px/14px "DejaVu Sans", Verdana, sans-serif;color:#fff;letter-spacing:-0.076px;-webkit-text-stroke:0.3px #fff;'>Optionen</span>
<span class="t" style='left:773.70px;top:196px;font:normal 11.7px/14px "DejaVu Sans", Verdana, sans-serif;color:#fff;letter-spacing:-0.121px;-webkit-text-stroke:0.3px #fff;'>Abmelden</span>
<span class="t" style='left:108.00px;top:227px;font:normal 8.8px/14px "DejaVu Sans", Verdana, sans-serif;color:#444;letter-spacing:-0.042px;'>Erfassung</span>
<span class="t" style='left:166.70px;top:227px;font:normal 8.8px/14px "DejaVu Sans", Verdana, sans-serif;color:#3a6cb0;letter-spacing:-0.020px;'>Dokumente</span>
<span class="t" style='left:232.00px;top:227px;font:normal 8.8px/14px "DejaVu Sans", Verdana, sans-serif;color:#444;letter-spacing:-0.069px;'>Aufgaben</span>
<span class="t" style='left:130.60px;top:252px;font:normal 10.6px/14px "DejaVu Sans", Verdana, sans-serif;color:#333;letter-spacing:-0.194px;'>\Ablageorte</span>
<span class="t" style='left:120.00px;top:301px;font:normal 10.3px/14px "DejaVu Sans", Verdana, sans-serif;color:#3a3a3a;letter-spacing:0.030px;-webkit-text-stroke:0.15px #3a3a3a;'>Vorverarbeitung</span>
<span class="t" style='left:120.00px;top:323px;font:normal 10.3px/14px "DejaVu Sans", Verdana, sans-serif;color:#3a3a3a;letter-spacing:0.030px;-webkit-text-stroke:0.15px #3a3a3a;'>Posteingänge</span>
<span class="t" style='left:120.00px;top:345px;font:normal 10.3px/14px "DejaVu Sans", Verdana, sans-serif;color:#3a6cb0;letter-spacing:0.030px;-webkit-text-stroke:0.15px #3a6cb0;'>Ablageorte</span>
<span class="t" style='left:132.00px;top:367px;font:normal 10.3px/14px "DejaVu Sans", Verdana, sans-serif;color:#3a3a3a;letter-spacing:0.030px;-webkit-text-stroke:0.15px #3a3a3a;'>Hammerschmid</span>
<span class="t" style='left:144.00px;top:389px;font:normal 10.3px/14px "DejaVu Sans", Verdana, sans-serif;color:#3a3a3a;letter-spacing:0.030px;-webkit-text-stroke:0.15px #3a3a3a;'>Debitorendokumente</span>
<span class="t" style='left:144.00px;top:411px;font:normal 10.3px/14px "DejaVu Sans", Verdana, sans-serif;color:#3a3a3a;letter-spacing:0.030px;-webkit-text-stroke:0.15px #3a3a3a;'>Fahrzeugakten</span>
<span class="t" style='left:144.00px;top:433px;font:normal 10.3px/14px "DejaVu Sans", Verdana, sans-serif;color:#3a3a3a;letter-spacing:0.030px;-webkit-text-stroke:0.15px #3a3a3a;'>Kreditorendokumente</span>
<span class="t" style='left:144.00px;top:456px;font:normal 10.3px/14px "DejaVu Sans", Verdana, sans-serif;color:#3a3a3a;letter-spacing:0.030px;-webkit-text-stroke:0.15px #3a3a3a;'>Personaldokumente</span>
<span class="t" style='left:144.00px;top:478px;font:normal 10.3px/14px "DejaVu Sans", Verdana, sans-serif;color:#3a3a3a;letter-spacing:0.030px;-webkit-text-stroke:0.15px #3a3a3a;'>Projektakten</span>
<span class="t" style='left:144.00px;top:500px;font:normal 10.3px/14px "DejaVu Sans", Verdana, sans-serif;color:#3a3a3a;letter-spacing:0.030px;-webkit-text-stroke:0.15px #3a3a3a;'>Unternehmensdokumente</span>
<span class="t" style='left:144.00px;top:522px;font:normal 10.3px/14px "DejaVu Sans", Verdana, sans-serif;color:#3a3a3a;letter-spacing:0.030px;-webkit-text-stroke:0.15px #3a3a3a;'>WORKFLOW</span>
<span class="t" style='left:132.00px;top:544px;font:normal 10.3px/14px "DejaVu Sans", Verdana, sans-serif;color:#3a3a3a;letter-spacing:0.030px;-webkit-text-stroke:0.15px #3a3a3a;'>z_Backup</span>
<span class="t" style='left:120.00px;top:566px;font:normal 10.3px/14px "DejaVu Sans", Verdana, sans-serif;color:#3a3a3a;letter-spacing:0.030px;-webkit-text-stroke:0.15px #3a3a3a;'>Persönlich</span>
<span class="t" style='left:120.00px;top:588px;font:normal 10.3px/14px "DejaVu Sans", Verdana, sans-serif;color:#3a3a3a;letter-spacing:0.030px;-webkit-text-stroke:0.15px #3a3a3a;'>Papierkorb</span>
<span class="t" style='left:120.00px;top:610px;font:normal 10.3px/14px "DejaVu Sans", Verdana, sans-serif;color:#3a3a3a;letter-spacing:0.030px;-webkit-text-stroke:0.15px #3a3a3a;'>Dokumentationen</span>
<span class="t" style='left:616.00px;top:279px;font:normal 10.3px/14px "DejaVu Sans", Verdana, sans-serif;color:#333;letter-spacing:0.016px;'>Gesamtsuche (global)</span>
<span class="t" style='left:385.30px;top:306px;font:normal 10.3px/14px "DejaVu Sans", Verdana, sans-serif;color:#2f63a8;'>1</span>
<span class="t" style='left:410.60px;top:306px;font:normal 10.3px/14px "DejaVu Sans", Verdana, sans-serif;color:#333;'>2</span>
<span class="t" style='left:445.90px;top:306px;font:normal 10.3px/14px "DejaVu Sans", Verdana, sans-serif;color:#333;letter-spacing:-0.062px;'>Seite</span>
<span class="t" style='left:484.20px;top:306px;font:normal 10.3px/14px "DejaVu Sans", Verdana, sans-serif;color:#333;'>1</span>
<span class="t" style='left:514.60px;top:306px;font:normal 10.3px/14px "DejaVu Sans", Verdana, sans-serif;color:#333;letter-spacing:-0.210px;'>von 2</span>
<span class="t" style='left:712.50px;top:306px;font:normal 10.3px/14px "DejaVu Sans", Verdana, sans-serif;color:#333;letter-spacing:0.063px;'>Einträge 1 - 35 von 50</span>
<span class="t" style='left:384.50px;top:331px;font:normal 10.3px/14px "DejaVu Sans", Verdana, sans-serif;color:#333;letter-spacing:-0.348px;'>T...</span>
<span class="t" style='left:413.25px;top:331px;font:normal 10.3px/14px "DejaVu Sans", Verdana, sans-serif;color:#333;letter-spacing:-0.020px;'>Dokumentname</span>
<span class="t" style='left:413.25px;top:361px;font:normal 10.3px/14px "DejaVu Sans", Verdana, sans-serif;color:#3e6fb2;letter-spacing:0.001px;'>D<i class="u u2">__</i>Ang<i class="u u2">__</i>Bilfinger Berger Industrial Services GmbH<i class="u u2">__</i>cad2022<i class="h">-</i>email<i class="u u1">_</i>...</span>
<span class="t" style='left:413.25px;top:404px;font:normal 10.3px/14px "DejaVu Sans", Verdana, sans-serif;color:#3e6fb2;letter-spacing:0.038px;'>D<i class="u u2">__</i>Ang<i class="u u2">__</i>Albani Group GmbH &amp; Co. KG<i class="u u2">__</i>AG<i class="h">-</i>240014<i class="u u2">__</i>2021<i class="h">-</i>03<i class="h">-</i>26</span>
<span class="t" style='left:413.25px;top:446px;font:normal 10.3px/14px "DejaVu Sans", Verdana, sans-serif;color:#3e6fb2;letter-spacing:0.026px;'>D<i class="u u2">__</i>Lie<i class="u u2">__</i>betapharm Arzneimittel GmbH<i class="u u2">__</i>LI<i class="h">-</i>240007<i class="u u2">__</i>2021<i class="h">-</i>03<i class="h">-</i>26</span>
<span class="t" style='left:413.25px;top:489px;font:normal 10.3px/14px "DejaVu Sans", Verdana, sans-serif;color:#3e6fb2;letter-spacing:0.026px;'>D<i class="u u2">__</i>Lie<i class="u u2">__</i>betapharm Arzneimittel GmbH<i class="u u2">__</i>LI<i class="h">-</i>240007<i class="u u2">__</i>2021<i class="h">-</i>03<i class="h">-</i>26</span>
<span class="t" style='left:413.25px;top:532px;font:normal 10.3px/14px "DejaVu Sans", Verdana, sans-serif;color:#3e6fb2;letter-spacing:0.003px;'>D<i class="u u2">__</i>Rec<i class="u u2">__</i>betapharm Arzneimittel GmbH<i class="u u2">__</i>RE<i class="h">-</i>240009<i class="u u2">__</i>2021<i class="h">-</i>03<i class="h">-</i>26</span>
<span class="t" style='left:413.25px;top:574px;font:normal 10.3px/14px "DejaVu Sans", Verdana, sans-serif;color:#3e6fb2;letter-spacing:0.003px;'>D<i class="u u2">__</i>Rec<i class="u u2">__</i>betapharm Arzneimittel GmbH<i class="u u2">__</i>RE<i class="h">-</i>240009<i class="u u2">__</i>2021<i class="h">-</i>03<i class="h">-</i>26</span>
<span class="t" style='left:413.25px;top:617px;font:normal 10.3px/14px "DejaVu Sans", Verdana, sans-serif;color:#3e6fb2;letter-spacing:0.056px;'>D<i class="u u2">__</i>Lie<i class="u u2">__</i>Albani Group GmbH &amp; Co. KG<i class="u u2">__</i>LI<i class="h">-</i>240008<i class="u u2">__</i>2021<i class="h">-</i>03<i class="h">-</i>26</span>
</div>
</body></html>
